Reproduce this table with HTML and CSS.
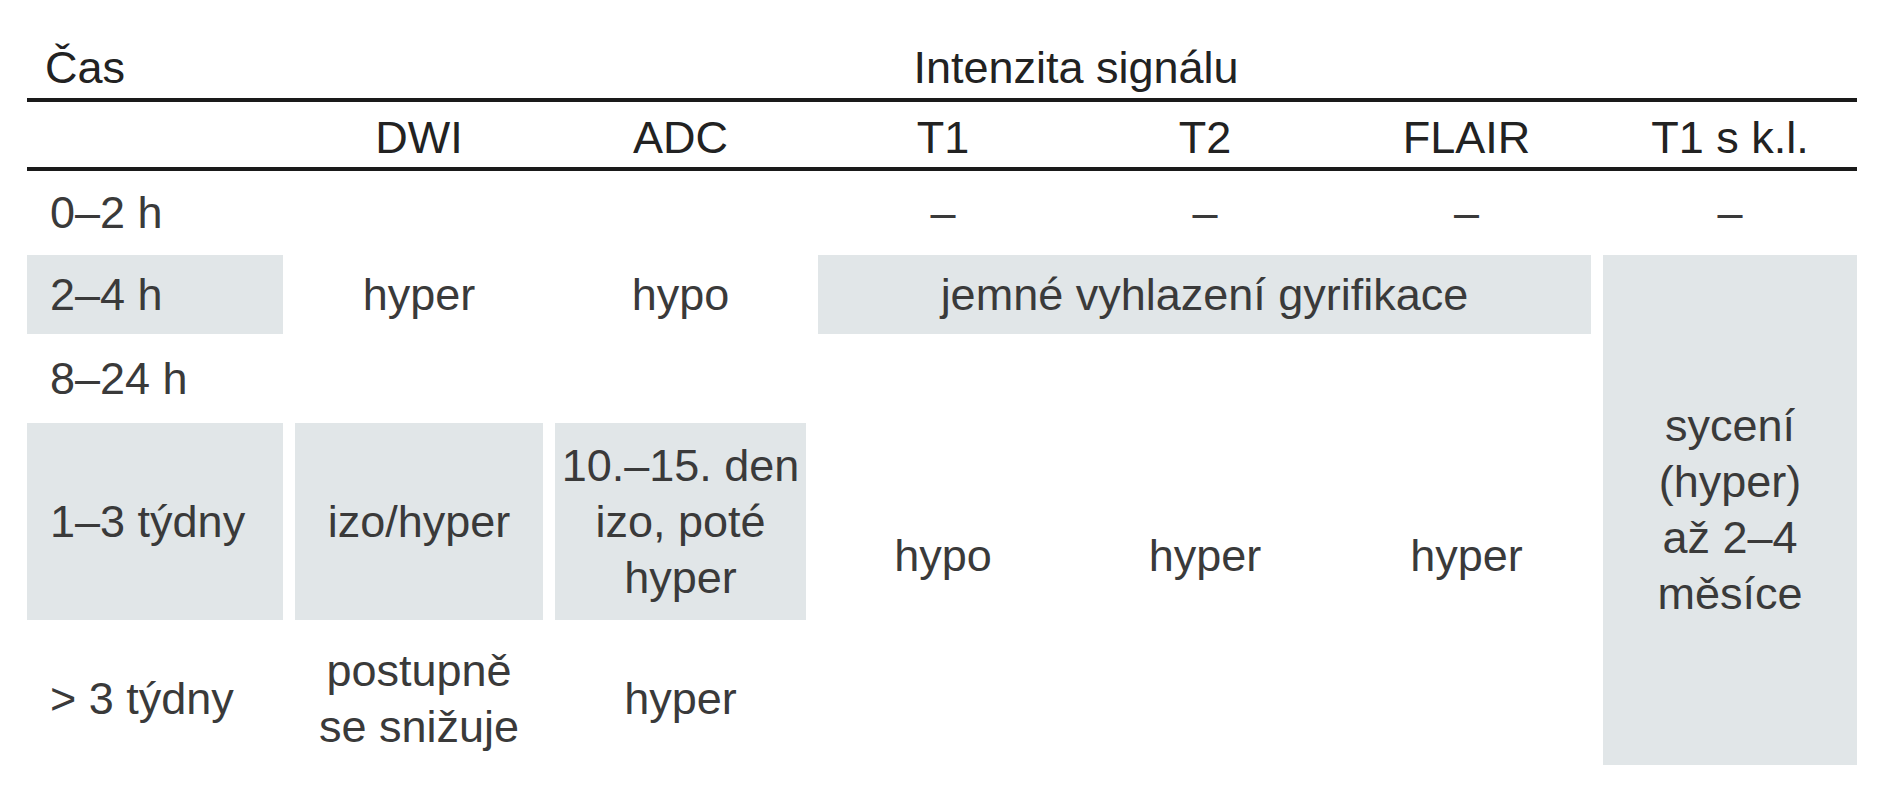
FILE: index.html
```html
<!DOCTYPE html>
<html lang="cs">
<head>
<meta charset="utf-8">
<title>Intenzita signálu</title>
<link rel="stylesheet" href="styles.css">
</head>
<body>
<div class="table">
  <div class="thead">
    <div class="hrow hrow1">
      <div class="hcell first">Čas</div>
      <div class="hcell span-int">Intenzita signálu</div>
    </div>
    <div class="hrow hrow2">
      <div class="hcell first"></div>
      <div class="hcell">DWI</div>
      <div class="hcell">ADC</div>
      <div class="hcell">T1</div>
      <div class="hcell">T2</div>
      <div class="hcell">FLAIR</div>
      <div class="hcell">T1 s k.l.</div>
    </div>
  </div>
  <div class="tbody">
    <!-- row 1: 0–2 h -->
    <div class="cell label r1 c1">0–2 h</div>
    <div class="cell r1 c4">–</div>
    <div class="cell r1 c5">–</div>
    <div class="cell r1 c6">–</div>
    <div class="cell r1 c7">–</div>

    <!-- row 2: 2–4 h -->
    <div class="cell label shade r2 c1">2–4 h</div>
    <div class="cell r2 c2">hyper</div>
    <div class="cell r2 c3">hypo</div>
    <div class="cell shade r2 c4-6">jemné vyhlazení gyrifikace</div>
    <div class="cell shade r2-5 c7">sycení<br>(hyper)<br>až 2–4<br>měsíce</div>

    <!-- row 3: 8–24 h -->
    <div class="cell label r3 c1">8–24 h</div>

    <!-- rows 3–5: T1, T2, FLAIR -->
    <div class="cell r3-5 c4">hypo</div>
    <div class="cell r3-5 c5">hyper</div>
    <div class="cell r3-5 c6">hyper</div>

    <!-- row 4: 1–3 týdny -->
    <div class="cell label shade r4 c1">1–3 týdny</div>
    <div class="cell shade r4 c2">izo/hyper</div>
    <div class="cell shade r4 c3">10.–15. den<br>izo, poté<br>hyper</div>

    <!-- row 5: > 3 týdny -->
    <div class="cell label r5 c1">&gt; 3 týdny</div>
    <div class="cell r5 c2">postupně<br>se snižuje</div>
    <div class="cell r5 c3">hyper</div>
  </div>
</div>
</body>
</html>
```

FILE: styles.css
```css
html, body {
  margin: 0;
  padding: 0;
  background: #ffffff;
}

body {
  font-family: "Liberation Sans", Arial, sans-serif;
  font-size: 45px;
  color: #3a3a3a;
}

.table {
  margin-left: 27px;
  width: 1830px;
}

.hrow,
.tbody {
  display: grid;
  grid-template-columns: 256px 248px 251px 250px 250px 249px 254px;
  column-gap: 12px;
}

.hrow {
  line-height: 55px;
  color: #222222;
  border-bottom: 4px solid #1a1a1a;
}

.hrow1 {
  padding-top: 40px;
  padding-bottom: 3px;
}

.hrow2 {
  padding-top: 8px;
  padding-bottom: 2px;
}

.hcell {
  text-align: center;
  white-space: nowrap;
}

.hcell.first {
  text-align: left;
  padding-left: 18px;
}

.span-int {
  grid-column: 2 / 8;
}

.tbody {
  padding-top: 11px;
  grid-template-rows: 61px 79px 65px 197px 133px;
  row-gap: 12px;
}

.cell {
  display: flex;
  align-items: center;
  justify-content: center;
  text-align: center;
  line-height: 56px;
  white-space: nowrap;
}

.cell.label {
  justify-content: flex-start;
  text-align: left;
  padding-left: 23px;
}

.shade {
  background: #e1e6e8;
}

.r1 { grid-row: 1; }
.r2 { grid-row: 2; }
.r3 { grid-row: 3; }
.r4 { grid-row: 4; }
.r5 { grid-row: 5; }
.r2-5 { grid-row: 2 / 6; }
.r3-5 { grid-row: 3 / 6; }

.c1 { grid-column: 1; }
.c2 { grid-column: 2; }
.c3 { grid-column: 3; }
.c4 { grid-column: 4; }
.c5 { grid-column: 5; }
.c6 { grid-column: 6; }
.c7 { grid-column: 7; }
.c4-6 { grid-column: 4 / 7; }
```
